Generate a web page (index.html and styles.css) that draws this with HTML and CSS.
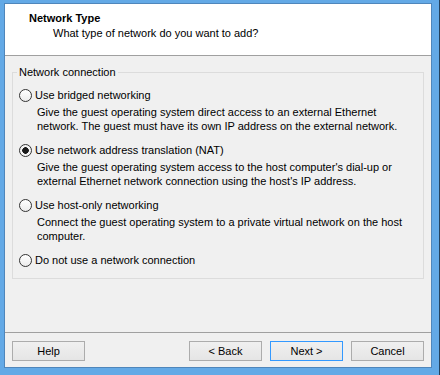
FILE: index.html
```html
<!DOCTYPE html>
<html lang="en">
<head>
    <meta charset="UTF-8">
    <meta name="viewport" content="width=device-width, initial-scale=1.0">
    <title>New Virtual Machine Wizard</title>
    <link rel="stylesheet" href="styles.css">
</head>
<body>
    <div class="window">
        <div class="header">
            <div class="title">Network Type</div>
            <div class="subtitle">What type of network do you want to add?</div>
        </div>

        <div class="main">
            <fieldset class="group">
                <legend>Network connection</legend>

                <div class="option">
                    <label class="choice"><input type="radio" name="net"> Use bridged networking</label>
                    <p class="desc">Give the guest operating system direct access to an external Ethernet<br>network. The guest must have its own IP address on the external network.</p>
                </div>

                <div class="option">
                    <label class="choice"><input type="radio" name="net" checked> Use network address translation (NAT)</label>
                    <p class="desc">Give the guest operating system access to the host computer's dial-up or<br>external Ethernet network connection using the host's IP address.</p>
                </div>

                <div class="option">
                    <label class="choice"><input type="radio" name="net"> Use host-only networking</label>
                    <p class="desc">Connect the guest operating system to a private virtual network on the host<br>computer.</p>
                </div>

                <div class="option">
                    <label class="choice"><input type="radio" name="net"> Do not use a network connection</label>
                </div>
            </fieldset>
        </div>

        <div class="footer">
            <button type="button">Help</button>
            <button type="button" class="push">&lt; Back</button>
            <button type="button" class="default">Next &gt;</button>
            <button type="button">Cancel</button>
        </div>
    </div>
</body>
</html>
```

FILE: styles.css
```css
body {
    margin: 0;
    padding: 3px 7px 7px 4px;
    height: 375px;
    box-sizing: border-box;
    background: #63a9e6;
    border-right: 1px solid #24425e;
    font: 11px "Liberation Sans", Arial, sans-serif;
    color: #000;
}
.window {
    height: 100%;
    box-sizing: border-box;
    border: 1px solid #4f86bb;
    background: #f0f0f0;
    display: flex;
    flex-direction: column;
}
.header {
    background: #fff;
    height: 52px;
    box-sizing: border-box;
    padding: 8px 0 0 24px;
    border-bottom: 1px solid #a0a0a0;
}
.title {
    font-weight: bold;
    line-height: 13px;
}
.subtitle {
    padding-left: 24px;
    margin-top: 2px;
    line-height: 13px;
}
.main {
    flex: 1;
    padding: 10px 7px 0;
}
.group {
    margin: 0;
    min-width: 0;
    border: 1px solid #dcdcdc;
    padding: 10px 6px 11px;
}
.group legend {
    padding: 0 2px;
    margin-left: -2px;
    line-height: 13px;
}
.option {
    margin-bottom: 11px;
}
.option:last-child {
    margin-bottom: 0;
}
.choice {
    display: flex;
    align-items: center;
    gap: 3px;
    height: 13px;
    line-height: 13px;
}
.choice input {
    appearance: none;
    -webkit-appearance: none;
    width: 13px;
    height: 13px;
    margin: 0;
    border: 1px solid #333;
    border-radius: 50%;
    background: linear-gradient(#ffffff, #ececec);
}
.choice input:checked {
    background: radial-gradient(circle, #1a1a1a 0 3px, #f4f4f4 3.6px);
}
.desc {
    margin: 3px 0 0;
    padding-left: 18px;
    line-height: 14px;
}
.footer {
    border-top: 1px solid #a0a0a0;
    padding: 8px 7px 6px;
    display: flex;
    gap: 8px;
}
.footer button {
    width: 73px;
    height: 20px;
    margin: 0;
    padding: 0;
    border: 1px solid #acacac;
    background: linear-gradient(#f0f0f0, #e5e5e5);
    font: inherit;
    color: #000;
}
.footer .push {
    margin-left: auto;
}
.footer .default {
    border-color: #3399ff;
}
```
